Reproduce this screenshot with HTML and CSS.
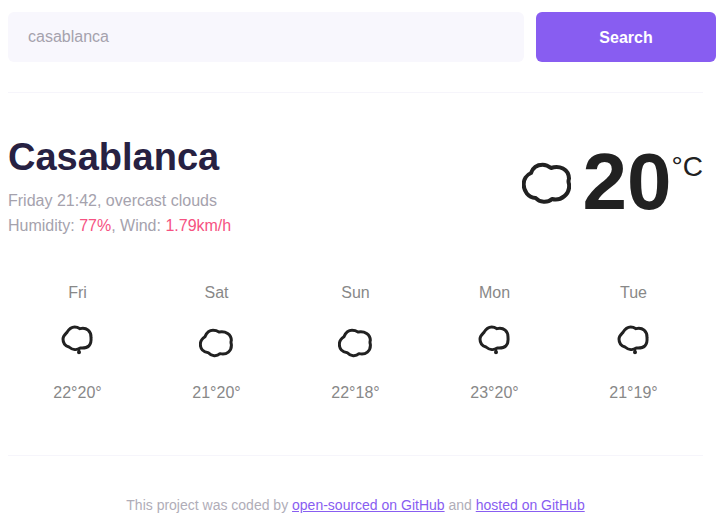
FILE: index.html
```html
<!DOCTYPE html>
<html lang="en">
<head>
<meta charset="utf-8">
<title>Weather</title>
<link rel="stylesheet" href="styles.css">
</head>
<body>
<svg class="defs" aria-hidden="true">
  <symbol id="cloud" viewBox="36 66 147 126">
    <path d="M63 99C69 81 83 74 98 74Q111 74 123 84C148 75 176 87 177 116Q174 124 177 132C181 162 153 184 126 177C113 189 89 188 77 174C54 172 41 153 41 133C41 119 49 105 63 99Z" stroke-width="12"/>
  </symbol>
  <symbol id="cloud-small" viewBox="56 150 105 108">
    <path d="M74 185C80 171 89 166 98 166Q108 166 116 171C136 167 153 178 153 196Q151 202 153 208C155 228 139 241 119 236C109 245 94 244 84 233C69 232 60 221 60 208C60 196 66 190 74 185Z" stroke-width="9"/>
  </symbol>
  <symbol id="drizzle" viewBox="59 150 105 108">
    <path d="M80 172C87 160 95 156 103 156Q111 156 119 161C139 156 153 169 152 188C154 210 144 221 120 219C110 226 96 225 86 216C75 213 68 204 68 192C68 183 74 178 80 172Z" stroke-width="9"/>
    <path d="M116 222V232" stroke-width="7"/>
    <circle cx="116" cy="232" r="3" stroke-width="6"/>
  </symbol>
</svg>
<main class="app">
  <form class="search">
    <input class="search-input" type="search" aria-label="City" placeholder="Enter a city.." value="casablanca">
    <button class="search-button" type="button">Search</button>
  </form>
  <section class="current">
    <div>
      <h1 class="city">Casablanca</h1>
      <p class="details">Friday 21:42, overcast clouds<br>Humidity: <strong>77%</strong>, Wind: <strong>1.79km/h</strong></p>
    </div>
    <div class="temperature">
      <svg class="current-icon" aria-hidden="true"><use href="#cloud"/></svg>
      <span class="value">20</span>
      <span class="unit">°C</span>
    </div>
  </section>
  <section class="forecast">
    <div class="day"><span>Fri</span><svg class="day-icon" aria-hidden="true"><use href="#drizzle"/></svg><span>22°20°</span></div>
    <div class="day"><span>Sat</span><svg class="day-icon" aria-hidden="true"><use href="#cloud-small"/></svg><span>21°20°</span></div>
    <div class="day"><span>Sun</span><svg class="day-icon" aria-hidden="true"><use href="#cloud-small"/></svg><span>22°18°</span></div>
    <div class="day"><span>Mon</span><svg class="day-icon" aria-hidden="true"><use href="#drizzle"/></svg><span>23°20°</span></div>
    <div class="day"><span>Tue</span><svg class="day-icon" aria-hidden="true"><use href="#drizzle"/></svg><span>21°19°</span></div>
  </section>
  <footer class="footer">This project was coded by <a href="#">open-sourced on GitHub</a> and <a href="#">hosted on GitHub</a></footer>
</main>
</body>
</html>
```
FILE: styles.css
```css
* {
  box-sizing: border-box;
}

body {
  margin: 0;
  background: #fff;
  font-family: "Liberation Sans", Arial, sans-serif;
  font-size: 16px;
}

.defs {
  position: absolute;
  width: 0;
  height: 0;
}

symbol {
  fill: none;
  stroke: #212121;
  stroke-linejoin: round;
}

.app {
  padding: 12px 24px 0 8px;
}

.search {
  display: flex;
  gap: 12px;
  margin-right: -13px;
}

.search-input {
  flex: 1;
  min-width: 0;
  height: 50px;
  padding: 0 20px;
  border: 0;
  border-radius: 6px;
  background: #f8f7fd;
  color: #a5a2ad;
  font: inherit;
  appearance: none;
}

.search-button {
  width: 180px;
  height: 50px;
  padding: 2px 0 0;
  border: 0;
  border-radius: 6px;
  background: #885df1;
  color: #fff;
  font: inherit;
  font-weight: 700;
}

.current {
  display: flex;
  justify-content: space-between;
  margin-top: 30px;
  padding-top: 42px;
  border-top: 1px solid #f6f5fb;
}

.city {
  margin: 0;
  color: #272142;
  font-size: 38px;
  line-height: 44px;
}

.details {
  margin: 9px 0 0;
  color: #a5a2ad;
  line-height: 25px;
}

.details strong {
  color: #f65282;
  font-weight: 400;
}

.temperature {
  display: flex;
  align-items: flex-start;
  padding-top: 1px;
  color: #212121;
}

.current-icon {
  width: 49px;
  height: 42px;
  margin: 26px 12px 0 0;
  overflow: visible;
}

.value {
  font-size: 80px;
  font-weight: 700;
  line-height: 92px;
}

.unit {
  margin-top: 15px;
  font-size: 28px;
  line-height: 32px;
}

.forecast {
  display: grid;
  grid-template-columns: repeat(5, 1fr);
  margin-top: 46px;
  padding-bottom: 53px;
  border-bottom: 1px solid #f6f5fb;
}

.day {
  display: flex;
  flex-direction: column;
  align-items: center;
  color: #888;
  line-height: 18px;
}

.day-icon {
  width: 35px;
  height: 36px;
  margin: 23px 0;
}

.footer {
  padding-top: 41px;
  color: #b0adb8;
  font-size: 14px;
  line-height: 16px;
  text-align: center;
}

.footer a {
  color: #885df1;
}
```
